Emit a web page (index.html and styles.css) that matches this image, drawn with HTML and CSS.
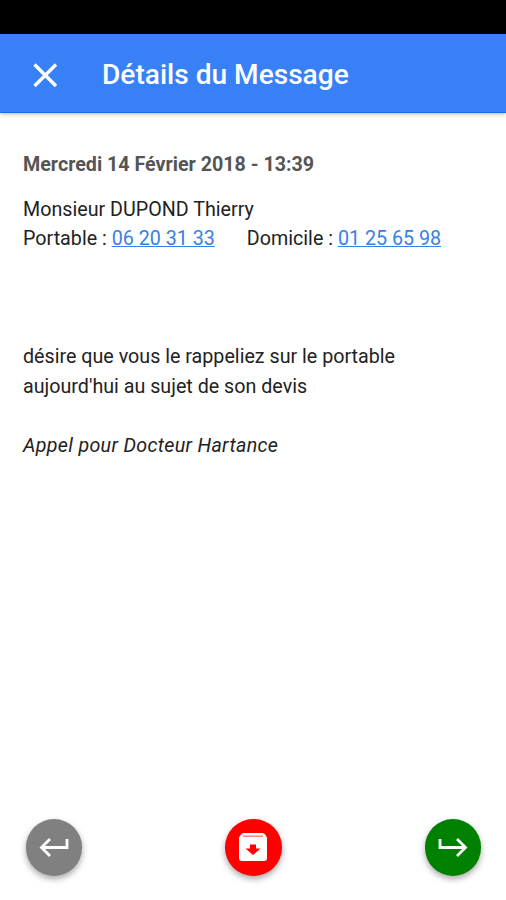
FILE: index.html
```html
<!DOCTYPE html>
<html lang="fr">
<head>
    <meta charset="UTF-8">
    <meta name="viewport" content="width=device-width, initial-scale=1.0">
    <title>Détails du Message</title>
    <link rel="stylesheet" href="styles.css">
</head>
<body>
    <div class="status-bar"></div>
    <header class="toolbar">
        <button class="close-btn" aria-label="Fermer">
            <svg width="26" height="26" viewBox="0 0 26 26">
                <path d="M2.500 2.500L24 24M24 2.500L2.500 24" stroke="#fff" stroke-width="3.4"/>
            </svg>
        </button>
        <h1>Détails du Message</h1>
    </header>

    <main class="message">
        <h2>Mercredi 14 Février 2018 - 13:39</h2>
        <div class="contact">
            <p class="name">Monsieur DUPOND Thierry</p>
            <p class="phones">
                <span>Portable : <a href="tel:06203133">06 20 31 33</a></span>
                <span>Domicile : <a href="tel:01256598">01 25 65 98</a></span>
            </p>
        </div>
        <p class="content">désire que vous le rappeliez sur le portable<br>aujourd'hui au sujet de son devis</p>
        <p class="recipient"><em>Appel pour Docteur Hartance</em></p>
    </main>

    <footer class="actions">
        <button class="fab gray" aria-label="Précédent">
            <svg width="30" height="20" viewBox="0 0 30 20">
                <path d="M28 2V10.500H3M11 2L2.500 10.500L11 19" fill="none" stroke="#fff" stroke-width="2.8"/>
            </svg>
        </button>
        <button class="fab red" aria-label="Archiver">
            <svg width="28" height="28" viewBox="0 0 28 28">
                <path d="M4.500 0H23.500Q25 0 26 1.500L28 4.500V25Q28 28 25 28H3Q0 28 0 25V4.500L2 1.500Q3 0 4.500 0Z" fill="#fff"/>
                <path d="M4 3.200H24" stroke="#f88" stroke-width="1.6"/>
                <path d="M11 11.500H17V15.500H21.500L14 22L6.500 15.500H11Z" fill="#f00"/>
            </svg>
        </button>
        <button class="fab green" aria-label="Suivant">
            <svg width="30" height="20" viewBox="0 0 30 20">
                <path d="M2 2V10.500H27M19 2L27.500 10.500L19 19" fill="none" stroke="#fff" stroke-width="2.8"/>
            </svg>
        </button>
    </footer>
</body>
</html>
```
FILE: styles.css
```css
* {
    box-sizing: border-box;
}

body {
    margin: 0;
    height: 100vh;
    display: flex;
    flex-direction: column;
    font-family: Roboto, "Liberation Sans", sans-serif;
    font-size: 19.7px;
    line-height: 29.5px;
    color: #222;
    background: #fff;
}

h1, h2, p {
    margin: 0;
}

button {
    border: none;
    padding: 0;
    cursor: pointer;
}

svg {
    display: block;
}

.status-bar {
    height: 34px;
    background: #000;
}

.toolbar {
    height: 79px;
    display: flex;
    align-items: center;
    padding: 3px 0 0 32px;
    background: #3880f6;
    border-bottom: 1px solid #1c6ddc;
    box-shadow: 0 1px 4px rgba(0, 0, 0, 0.3);
}

.close-btn {
    margin-right: 44px;
    background: none;
}

.toolbar h1 {
    font-size: 28.1px;
    font-weight: 500;
    color: #fff;
}

.message {
    flex: 1;
    padding: 37px 23px 0;
}

.message h2 {
    font-size: 19.7px;
    font-weight: 700;
    color: #555;
}

.contact {
    margin-top: 15px;
}

.phones {
    display: flex;
    gap: 32px;
}

.phones a {
    color: #3880e6;
}

.content {
    margin-top: 88.5px;
}

.recipient {
    margin-top: 30px;
    letter-spacing: 0.31px;
}

.actions {
    display: flex;
    justify-content: space-between;
    padding: 0 25px 24.5px 25.5px;
}

.fab {
    width: 56.5px;
    height: 56.5px;
    display: flex;
    align-items: center;
    justify-content: center;
    border-radius: 50%;
    box-shadow: 0 3px 6px rgba(0, 0, 0, 0.35);
}

.gray {
    background: #808080;
}

.red {
    background: #fe0000;
}

.green {
    background: #008000;
}
```
